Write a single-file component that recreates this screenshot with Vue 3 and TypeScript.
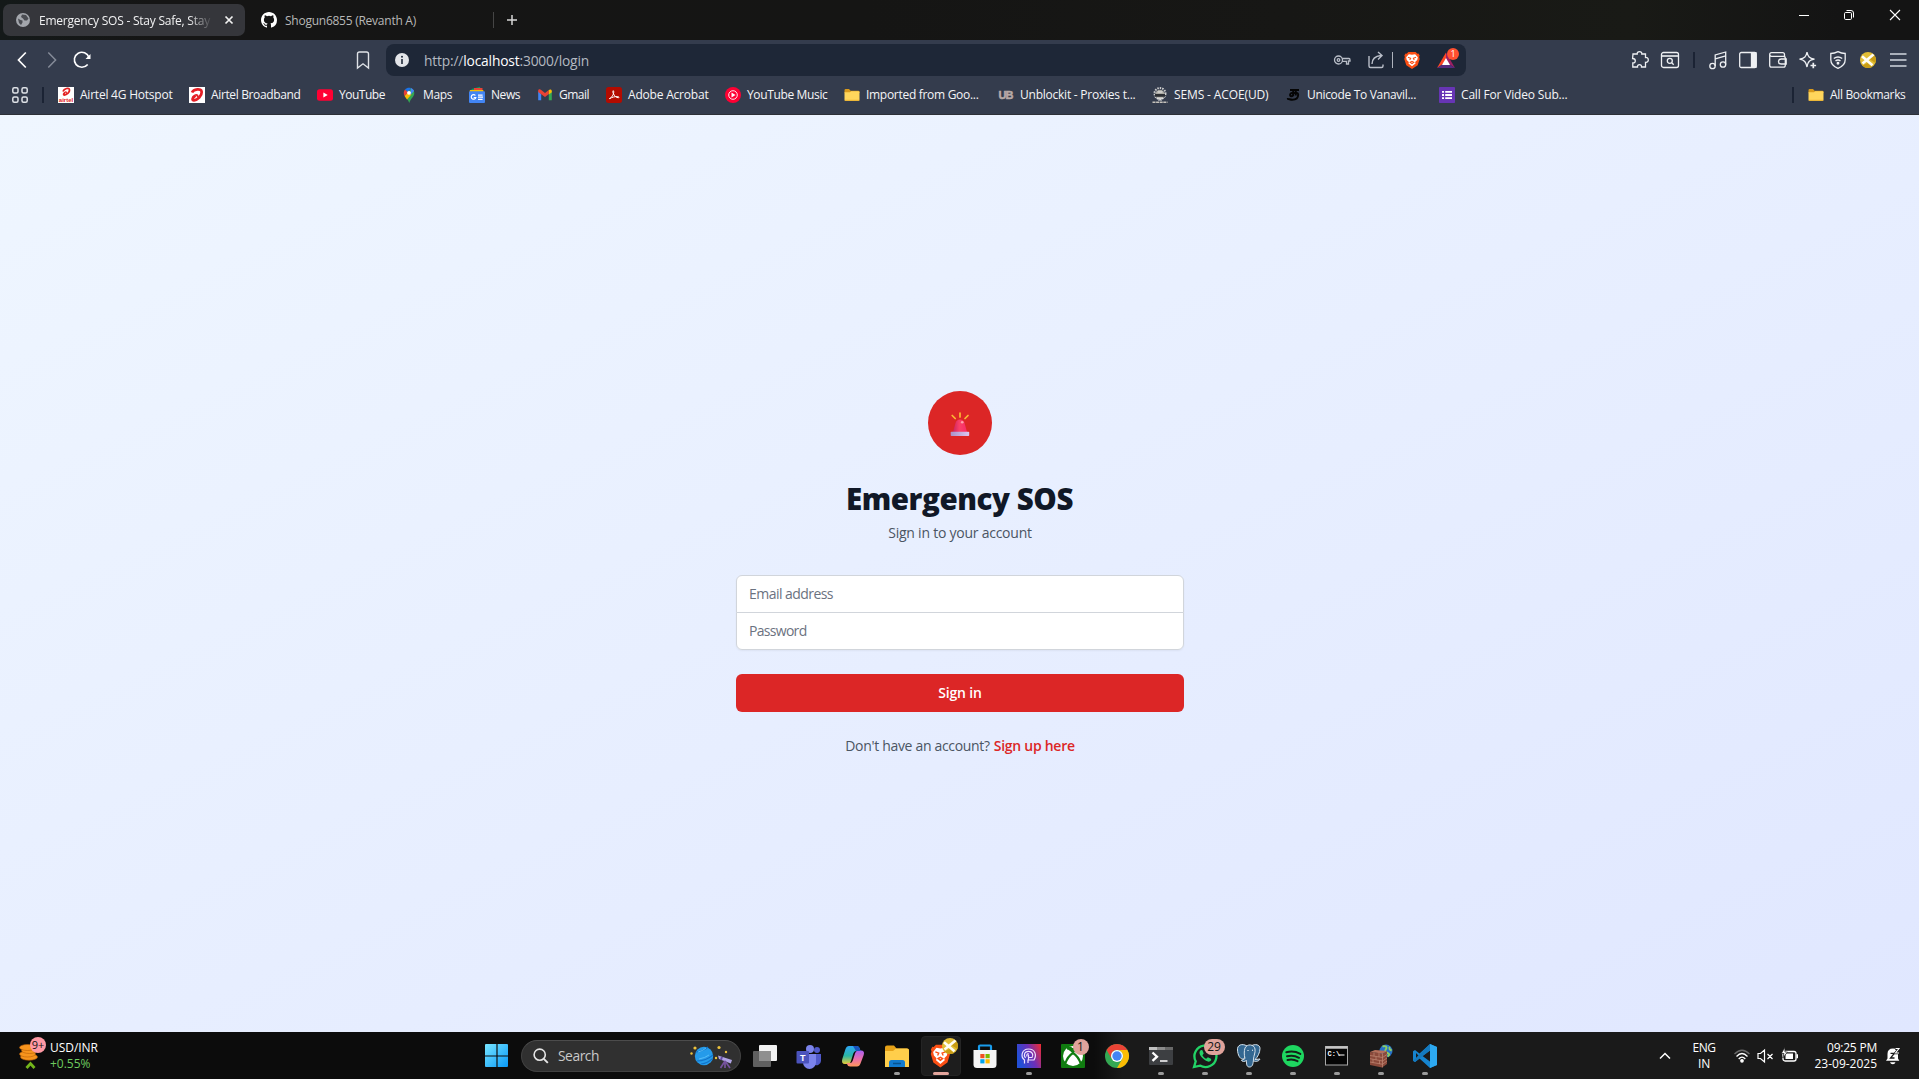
<script setup lang="ts">
import type { Directive } from 'vue'

interface Bookmark { icon: string; label: string; span: number; text: number }
interface Tool { name: string; art: string }
interface TaskApp { name: string; art: string; running?: boolean; active?: boolean; badge?: string }

// Spreads the letters of a label evenly over the given width in pixels.
const vFit: Directive<HTMLElement, number> = {
  mounted(el, { value }) {
    const count = (el.textContent ?? '').trim().length
    if (count > 0) {
      const gap = (value - el.getBoundingClientRect().width) / count
      el.style.letterSpacing = `${gap.toFixed(3)}px`
    }
  },
}

const folder = '<path d="M0.5 3.2Q.5 2 1.7 2H5l1.6 1.7H14.400Q15.500 3.700 15.500 4.800V6H.5z" fill="#d99a1c"/><path d="M.5 5.300H6l1.200-1H14.500Q15.500 4.300 15.500 5.300V12.800Q15.500 14 14.300 14H1.700Q.5 14 .5 12.800z" fill="#ffd65c"/><path d="M.8 13.300h14.400" stroke="#e8b030"/>'

const bookmarks: Bookmark[] = [
  { label: 'Airtel 4G Hotspot', span: 131, text: 92.5, icon: '<rect width="16" height="16" fill="#fff"/><path d="M5 4.500C6 1.500 11.300 0 11.500 3c.2 2.500-3 5-5 5-1.500 0-.8-1.800.5-2.500 1-.6 1.400-.2.800.4" fill="none" stroke="#e32222" stroke-width="1.800"/><text x="8" y="14.800" font-family="Liberation Sans" font-weight="700" font-size="6" text-anchor="middle" fill="#e32222">airtel</text>' },
  { label: 'Airtel Broadband', span: 128, text: 89.5, icon: '<rect width="16" height="16" fill="#fff"/><path d="M3 5.500C4.500 2 12.500.8 12.700 5c.2 4-4.200 8-7.700 8.300-2.500 0-1.500-2.800.8-4.300 1.700-1 3-.4 2 .5" fill="none" stroke="#e51e25" stroke-width="2.700"/>' },
  { label: 'YouTube', span: 84, text: 46, icon: '<rect y="2.300" width="16" height="11.500" rx="2.500" fill="#ff0033"/><path d="M6.400 5.500v5l4.300-2.500z" fill="#fff"/>' },
  { label: 'Maps', span: 68, text: 29, icon: '<path d="M3.600 9 9.900 1.200C12 2 13.300 3.800 13.300 6c0 4-3.800 5.300-5 10C7.300 13 5.200 11 3.600 9z" fill="#34a853"/><path d="M3.600 9 7.900 4l2.500 3.500L6 12.500z" fill="#fbbc04"/><path d="M4 2.600 7.300 5.300 3.600 9C2.300 6.600 2.500 4.300 4 2.600z" fill="#ea4335"/><path d="M4 2.600C5.500.700 8 .3 9.900 1L7.200 5.200z" fill="#1a73e8"/><path d="M9.900 1.100c1.500.4 2.700 1.600 3.200 3L9.400 8z" fill="#4285f4"/><circle cx="8" cy="5.800" r="1.900" fill="#fff"/>' },
  { label: 'News', span: 68, text: 29, icon: '<path d="M2.500 2 11-.2l1.200 6H3z" fill="#0c9d58"/><path d="M5 1h8.500v5H5z" fill="#ea4335"/><path d="M.8 3h13.500v3H.8z" fill="#fbbc04"/><rect y="4.300" width="16" height="11.700" rx="1" fill="#4285f4"/><path d="M6.400 8.500A2.300 2.300 0 1 0 6.800 10.500H4.700M9 8.100h4.600M9 10.200h5M9 12.300h4.600" stroke="#fff" stroke-width="1.200" fill="none"/>' },
  { label: 'Gmail', span: 69, text: 30, icon: '<path d="M1.200 4v9.300h3V7z" fill="#4285f4"/><path d="M11.800 7v6.300h3V4z" fill="#34a853"/><path d="M1.200 3.500C1.500 1.800 3.200 2 4.200 3l3.800 3 3.800-3v4L8 10 1.200 5z" fill="#ea4335"/><path d="M11.800 3c1.200-1 3-.8 3 1v1.200l-3 2.300z" fill="#fbbc04"/>' },
  { label: 'Adobe Acrobat', span: 119, text: 80.5, icon: '<rect width="16" height="16" rx="2.500" fill="#b30b00"/><path d="M3.300 11.600C6.500 10.300 8.300 6 7.600 4c-.4-1-1.300.5-.3 2.500 1.200 2.500 3 4.300 5.200 4.200.8-.1.700-1-.7-1.100-3-.2-6 .7-8 1.900z" fill="none" stroke="#fff" stroke-width="1"/>' },
  { label: 'YouTube Music', span: 119, text: 80.5, icon: '<circle cx="8" cy="8" r="8" fill="#ff0033"/><circle cx="8" cy="8" r="4.300" fill="none" stroke="#fff" stroke-width=".9"/><path d="M6.500 5.500v5l4-2.500z" fill="#fff"/>' },
  { label: 'Imported from Goo...', span: 154, text: 112.5, icon: folder },
  { label: 'Unblockit - Proxies t...', span: 154, text: 115.5, icon: '<text x="8" y="12" font-family="Liberation Sans" font-weight="700" font-size="11" textLength="15" text-anchor="middle" fill="#b8aaa6" stroke="#b8aaa6" stroke-width=".5">UB</text>' },
  { label: 'SEMS - ACOE(UD)', span: 133, text: 94.5, icon: '<circle cx="8" cy="6.500" r="5.500" fill="none" stroke="#cfcfcf" stroke-width="2" stroke-dasharray="1.500 1"/><circle cx="8" cy="7.500" r="4.700" fill="#aaa9a3"/><path d="M3 7h10v2.800H3z" fill="#2b2e33"/><path d="M5.500 5h5M4.500 11.200h7M6 13h4" stroke="#ececec"/><path d="M.5 15.200h15" stroke="#c6c2bc" stroke-width="1.500" stroke-dasharray="3 .6"/>' },
  { label: 'Unicode To Vanavil...', span: 154, text: 109, icon: '<path d="M5 3h9M8.200 3v6.300M8.200 6.300C5 5 4 9.300 6.300 9.300c1.500 0 1.900-1.300 1.900-3 2-1 5-.9 5 1.200 0 3.700-2.700 5.300-6 5.300-2 0-3.800-1.200-5.200-.9M10.800 3v5.500" fill="none" stroke="#050505" stroke-width="1.900"/>' },
  { label: 'Call For Video Sub...', span: 140, text: 106.5, icon: '<rect width="16" height="16" rx=".8" fill="#6735b5"/><path d="M3 4.800h2M3 8h2M3 11.200h2M6.200 4.800H13M6.200 8H13M6.200 11.200H13" stroke="#fff" stroke-width="1.800"/>' },
]

const brandLion = '<path d="M6 1h8l2 2 1.200-.2L18.500 5l-.6 1.600.7 2.200-2.300 7L10 20l-6.300-4.200-2.300-7 .7-2.200L1.500 5l1.300-2.200L4 3z" fill="#fb4f14"/><path d="M10 4.200 13.500 3.500 16.500 7l-.7 3-2.300 2.200.4 1.700L10 17l-3.900-3.100.4-1.700L4.200 10l-.7-3 3-3.500z" fill="#fff"/><path d="m5.500 7 3 1-1 2M14.500 7l-3 1 1 2M8 12.500l2-1 2 1-2 1.500z" fill="none" stroke="#fb4f14" stroke-width="1.200"/>'
const avatar = '<circle cx="10" cy="10" r="8" fill="#e2bd35" stroke="none"/><path d="M14.500 4A8 8 0 0 1 17.500 13L12 9.500zM4.500 15.500A8 8 0 0 0 14 17L9.500 13z" fill="#c99d14" stroke="none"/><path d="m4 6.200 10.500 9M15.500 4.500 4.500 13.500" stroke="#fffdf4" stroke-width="2.600"/>'

const toolsA: Tool[] = [
  { name: 'puzzle', art: '<path d="M3 4h4.200C7 2.500 8 1.600 9.500 1.600S12 2.500 11.800 4H15.500V7.500C17.200 7.300 18.300 8.300 18.300 9.900s-1.100 2.700-2.800 2.400V17H11.500c.2-1.600-.7-2.300-2-2.300s-2.200.7-2 2.300H2.800V13c1.700 0 2.500-.9 2.500-2.200S4.400 8.500 2.600 8.500z"/>' },
  { name: 'find', art: '<rect x="1.500" y="2.500" width="17" height="15" rx="2"/><path d="M1.500 6h17" stroke-width="1.600"/><circle cx="9.800" cy="10.800" r="2.500"/><path d="m11.700 12.700 2 2"/>' },
]
const toolsB: Tool[] = [
  { name: 'music', art: '<circle cx="4.500" cy="16" r="2.700"/><circle cx="15" cy="14.500" r="2.700"/><path d="M7.200 16V5l10.500-3v12.500M7.200 8.800l10.500-3"/>' },
  { name: 'sidebar', art: '<rect x="1.700" y="2.500" width="16.500" height="15" rx="1.600"/><path d="M13.500 3H18v14h-4.500z" fill="#eef0f3"/>' },
  { name: 'wallet', art: '<path d="M16.500 6.500V4.500Q16.500 2.700 14.700 2.700H3.500Q1.700 2.700 1.700 4.500V15.300Q1.700 17.200 3.500 17.200H15.500Q17.300 17.200 17.300 15.300V8.200Q17.300 6.300 15.500 6.300H3.500Q1.700 6.300 1.700 4.500M18.200 9H13.200Q10.500 9 10.500 11.500T13.200 14H18.200z"/>' },
  { name: 'sparkle', art: '<path d="M9 2.200c.9 4.500 2.300 6.200 7.500 7-2.400.4-4 .9-5 1.800-1.300 1.100-1.900 2.900-2.500 6-1-5-2.500-7-7.500-7.800C6.800 8.400 8.100 6.500 9 2.200z"/><path d="M15.300 12.700v5.600M12.500 15.500h5.600" stroke-width="1.700"/>' },
  { name: 'vpn', art: '<path d="M10 1.700c2.300 1.200 4.800 1.800 7.200 1.800v6.200c0 3.800-3.200 7-7.200 8.700-4-1.700-7.200-4.900-7.200-8.700V3.500C5.200 3.500 7.700 2.900 10 1.700z"/><path d="M5.800 8.500q4.200-3 8.400 0M7.500 11q2.500-1.800 5 0" stroke-width="1.500"/><circle cx="10" cy="13.200" r=".8" fill="#eef0f3"/>' },
  { name: 'profile', art: avatar },
  { name: 'menu', art: '<path d="M2 4h16.500M2 10h16.500M2 16h16.500" stroke="#aab0ba" stroke-width="1.800"/>' },
]

const taskApps: TaskApp[] = [
  { name: 'Task view', art: '<rect x="8" y="2" width="18" height="16" rx="1" fill="#f2f2f2"/><rect x="2" y="8" width="18" height="16" rx="1" fill="#696969" fill-opacity=".9"/><path d="M8 8h12v10H8z" fill="#8f8f8f"/>' },
  { name: 'Teams', art: '<circle cx="15" cy="6" r="4" fill="#7b83eb"/><circle cx="22" cy="7" r="3" fill="#5059c9"/><path d="M17 11h9v7a4.500 4.500 0 0 1-7 3.500z" fill="#5059c9"/><path d="M8 11h13v8.500a6.500 6.500 0 0 1-13 0z" fill="#7b83eb"/><rect x="1.500" y="8" width="12.500" height="12.500" rx="1" fill="#4b53bc"/><text x="7.700" y="17.500" font-family="Liberation Sans" font-weight="700" font-size="9" fill="#fff" text-anchor="middle">T</text>' },
  { name: 'Copilot', art: '<defs><linearGradient id="cpA" x2="0" y2="1"><stop stop-color="#2ea6f7"/><stop offset=".55" stop-color="#2ab7a5"/><stop offset="1" stop-color="#e9cd36"/></linearGradient><linearGradient id="cpB" x2="0" y2="1"><stop stop-color="#a85ff2"/><stop offset=".55" stop-color="#ed6fa9"/><stop offset="1" stop-color="#ff9859"/></linearGradient></defs><path d="M10 3h8q2 0 2.800 2.500L21.500 8H17q-2 0-2.700 2.500L12 18q-1 3-3.500 3H6Q2 21 3.300 16L6.500 6Q7.500 3 10 3z" fill="url(#cpA)"/><path d="M18 23.500h-7q-2.300 0-3-2.500L7.500 20h3.300q2.200 0 3-2.500L16 10.500Q17 7.500 19.500 7.500H22q4 0 2.700 4.500L21.500 20.500Q20.500 23.500 18 23.500z" fill="url(#cpB)"/><path d="M14 3h4q2 0 2.800 2.500l.7 2.500H17z" fill="#1854bf"/>' },
  { name: 'Files', running: true, art: '<path d="M2 4.500Q2 2.500 4 2.500h7l2.500 3H24q2 0 2 2V11H2z" fill="#e6a117"/><path d="M2 8h8l3-2.500h11q2 0 2 2V24H2z" fill="#ffce4b"/><path d="M6 24v-4.500Q6 17 8.500 17h11Q22 17 22 19.500V24z" fill="#117bd0"/><path d="M10 20.500h8" stroke="#075390" stroke-width="1.500"/>' },
  { name: 'Brave', running: true, active: true, art: `<g transform="translate(2.200 .5) scale(1.120 1.200)">${brandLion}</g><g transform="translate(13 -7)">${avatar}</g>` },
  { name: 'Store', art: '<path d="M8 9V3.500q0-1 1-1h10q1 0 1 1V9" fill="none" stroke="#199cec" stroke-width="2.200"/><path d="M2.500 7h23v14.500q0 3.500-3.500 3.500H6q-3.500 0-3.500-3.500z" fill="#f5f5f5"/><path d="M9.300 11h4.200v4.200H9.300z" fill="#f25022"/><path d="M14.500 11h4.200v4.200h-4.200z" fill="#7fba00"/><path d="M9.300 16.200h4.200v4.200H9.300z" fill="#00a4ef"/><path d="M14.500 16.200h4.200v4.200h-4.200z" fill="#ffb900"/>' },
  { name: 'Predator', running: true, art: '<defs><linearGradient id="pr" y1=".4" y2="0"><stop stop-color="#234fd6"/><stop offset=".5" stop-color="#6c2fb8"/><stop offset="1" stop-color="#f52c2c"/></linearGradient></defs><rect x="2" y="1" width="24" height="24" fill="url(#pr)"/><path d="M9.500 20.500V17C5 13.500 7 6 13.500 6S22 12 19 17H13v3M10.500 15C8 11.500 10 8.300 13.500 8.300s5.500 3.500 3.500 6.200h-3M13.500 17v-5.500M12 13.500c-.7-2 .5-3 1.700-3" fill="none" stroke="#f0e4ff" stroke-width="1.200"/>' },
  { name: 'Xbox', badge: '1', art: '<rect x="2" y="1" width="24" height="24" rx="1" fill="#107c10"/><circle cx="14" cy="13" r="10" fill="#fff"/><path d="M8 4.500q3-.5 6 2 3-2.500 6-2M6.500 20C8 15.500 11 12 14 10c3 2 6 5.500 7.500 10M8 5.500c2 0 4 1.500 6 4 2-2.500 4-4 6-4" fill="none" stroke="#107c10" stroke-width="2.200"/>' },
  { name: 'Chrome', art: '<circle cx="14" cy="13" r="12" fill="#34a853"/><path d="M3.600 7A12 12 0 0 1 24.400 7H14a6 6 0 0 0-5.200 9z" fill="#ea4335"/><path d="M24.400 7A12 12 0 0 1 14 25l5.200-9A6 6 0 0 0 14 7z" fill="#fbbc04"/><circle cx="14" cy="13" r="6" fill="#fff"/><circle cx="14" cy="13" r="4.700" fill="#4285f4"/>' },
  { name: 'Terminal', running: true, art: '<rect x="2" y="4" width="24" height="18" rx="1" fill="#3d3f42"/><path d="M2 4h8v3H2z" fill="#c0c0c0"/><path d="M10 4h8v3h-8z" fill="#8b8b8b"/><path d="M18 4h8v3h-8z" fill="#696969"/><path d="m5.500 9.500 4.500 4.200-4.500 4.200" stroke="#fff" stroke-width="2.300" fill="none"/><path d="M13 18h7.500" stroke="#fff" stroke-width="1.500"/>' },
  { name: 'WhatsApp', running: true, badge: '29', art: '<path d="m3 24 1.700-5.700A11 10.700 0 1 1 9 22.600z" fill="none" stroke="#22d366" stroke-width="2.300"/><path d="M10 7c-2.500 1.500-1.800 5 2 8.600 3.500 3.300 6.500 4.100 8.300 1.500l-.4-1.400-3-1.400-1.700 1.500c-1.800-.8-3-2-3.800-3.600l1.300-1.600-1.300-3.300z" fill="#22d366"/>' },
  { name: 'pgAdmin', running: true, art: '<g fill="#336791" stroke="#d7e3ec" stroke-width="1"><path d="M12 3C7 0 2 2 2.500 7c.3 5 2.500 9 5 9 1.500 0 2.500-2 4-3.500z"/><path d="M16 3c4-2.500 9-1.500 9 2.500s-2.500 9-5 11l5-.5c-1 2.500-5 3-7 1.500z"/><path d="M10 5c2-4.500 9-4 10 1 .6 4-1.200 6-1.500 10-.3 5-1 8-4 8s-3-3-3-6.500c-2 1.500-4.500 1-5 0l3.500-2C9 12 9 8 10 5z"/></g><path d="m12.500 7 1 1M17 7l1 .5" stroke="#fff"/>' },
  { name: 'Spotify', running: true, art: '<circle cx="14" cy="13" r="11" fill="#1ed760"/><path d="M7.300 9.300q7.500-2 14 1.600M8 13.300q6.500-1.600 12 1.500M8.500 17q5.500-1.300 10 1.200" fill="none" stroke="#142018" stroke-width="2" stroke-linecap="round"/>' },
  { name: 'Command', running: true, art: '<rect x="2.500" y="3.500" width="22" height="18.500" fill="#050505" stroke="#a8a8a8"/><path d="M2.500 4.500h22" stroke="#c5c5c5" stroke-width="2.500"/><text x="4.500" y="12.500" font-family="Liberation Mono" font-weight="700" font-size="7" fill="#fff">C:\\</text><path d="M15.500 12h6" stroke="#fff"/>' },
  { name: 'Firewall', running: true, art: '<circle cx="19" cy="8" r="6.500" fill="#2672c8"/><path d="M15.500 3.500c3-1 5 .5 3.500 2.500s-1 3 1.500 4 2 2 0 3.500M23 4c-1.500 1.500 0 3 1.700 3.500" stroke="#8ccc62" stroke-width="1.900" fill="none"/><path d="m3 9 12.500 1.500 4.500-2.500v13l-5 3.500L3 22z" fill="#8b4a3b"/><path d="m3 9 5-2 12 1-4.500 2.500z" fill="#b5705c"/><path d="m3 12.500 12.500 2L20 11.500M3 15.700l12.500 2.300 4.500-3M3 19l12.500 2.300 4.500-3.300M7 9.500v3.700M12 10v4M9 13.500V17M6 16.300v3.400M12.500 17.500V21M15.500 10.500v14" stroke="#c28a75" stroke-width=".7" fill="none"/>' },
  { name: 'Code', running: true, art: '<path d="m19 1 7 3v18l-7 3L8.500 15.500 4 19l-2-1.200V8.200L4 7l4.500 3.500z" fill="#1684cf"/><path d="m19 7.500-7.500 5.500 7.500 5.500zM5 10v6l3-3z" fill="#1a1a1a"/><path d="m19 1 7 3v18l-7 3z" fill="#2da9f1"/><path d="m2 17.800 2 1.200L19 7.500V1z" fill="#1479be"/>' },
]
</script>

<template>
  <div class="desktop">
    <header class="tabs">
      <div class="tab active">
        <svg class="globe" width="14" height="14" viewBox="0 0 14 14"><circle cx="7" cy="7" r="7" fill="#a3a6ac" /><path d="M2 5.500 4.500 7l2 .5v2L5 12 3 10zM6 1.500 5 4l2 1.500 1.500 2H11l1.500-2L10 2z" fill="#4a4c52" /></svg>
        <div class="tab-title"><span v-fit="171">Emergency SOS - Stay Safe, Stay</span></div>
        <svg width="10" height="10" viewBox="0 0 10 10"><path d="m1.500 1.500 7 7m0-7-7 7" stroke="#f2f2f2" stroke-width="1.700" /></svg>
      </div>
      <div class="tab idle">
        <svg width="16" height="16" viewBox="0 0 16 16"><path fill="#fff" d="M8 0C3.580 0 0 3.580 0 8c0 3.540 2.290 6.530 5.470 7.590.4.070.55-.17.55-.38v-1.490c-2.230.48-2.700-.94-2.700-.94-.36-.92-.89-1.170-.89-1.170-.73-.5.050-.49.050-.49.8.060 1.230.83 1.230.83.72 1.220 1.870.87 2.330.66.070-.52.280-.87.500-1.070-1.780-.2-3.640-.89-3.640-3.950 0-.87.310-1.590.82-2.150-.08-.2-.36-1.020.08-2.120 0 0 .67-.21 2.200.82a7.600 7.600 0 0 1 4 0c1.530-1.040 2.200-.82 2.200-.82.44 1.100.16 1.920.08 2.120.51.56.82 1.270.82 2.150 0 3.070-1.870 3.750-3.650 3.950.29.25.54.73.54 1.480v2.200c0 .21.15.46.55.38A8 8 0 0 0 16 8c0-4.420-3.580-8-8-8z" /></svg>
        <span v-fit="131">Shogun6855 (Revanth A)</span>
      </div>
      <i class="tab-line"></i>
      <svg class="plus" width="12" height="12" viewBox="0 0 12 12"><path d="M6 1v10M1 6h10" stroke="#d6d6d6" stroke-width="1.500" /></svg>
      <div class="window-buttons">
        <svg class="minimise" width="12" height="12" viewBox="0 0 12 12"><path d="M1 6.500h10" stroke="#fff" /></svg>
        <svg width="12" height="12" viewBox="0 0 12 12"><rect x="1.500" y="3.500" width="7" height="7" rx="1.200" fill="none" stroke="#fff" /><path d="M3.500 1.500H8q2.500 0 2.500 2.500v4.500" fill="none" stroke="#fff" /></svg>
        <svg width="12" height="12" viewBox="0 0 12 12"><path d="m1 1 10 10m0-10L1 11" stroke="#fff" stroke-width="1.100" /></svg>
      </div>
    </header>

    <nav class="toolbar">
      <svg class="slot" viewBox="0 0 30 20"><path d="M18.800 2.500 11.500 10l7.300 7.500" fill="none" stroke="#fff" stroke-width="1.700" /></svg>
      <svg class="slot" viewBox="0 0 30 20"><path d="m11.300 2.500 7.300 7.500-7.300 7.500" fill="none" stroke="#858b98" stroke-width="1.500" /></svg>
      <svg class="slot" viewBox="0 0 30 20"><path d="M22 7.500A7.500 7.500 0 1 0 20.700 14.500" fill="none" stroke="#fff" stroke-width="1.600" /><path d="M23.500 4v5h-5z" fill="#fff" /></svg>
      <svg class="slot mark" viewBox="0 0 30 20"><path d="M9.500 4q0-2 2-2h7q2 0 2 2v14L15 13.800 9.500 18z" fill="none" stroke="#dfe2e7" stroke-width="1.400" /></svg>
      <div class="omnibox">
        <svg width="14" height="14" viewBox="0 0 14 14"><circle cx="7" cy="7" r="7" fill="#e3e5e9" /><path d="M7 6v5" stroke="#1e2737" stroke-width="1.600" /><circle cx="7" cy="3.800" r="1" fill="#1e2737" /></svg>
        <span v-fit="165" class="url">http://<b>localhost</b>:3000/login</span>
        <div class="omni-tools">
          <svg width="18" height="18" viewBox="0 0 18 18" fill="none" stroke="#b9bec8" stroke-width="1.300"><circle cx="5.500" cy="9" r="4" /><circle cx="5.500" cy="9" r="1.300" /><path d="M9.200 7.500H16q1 0 1 1.500v1h-1.500v3h-2v-2.700H9.200" /></svg>
          <svg class="share" width="18" height="18" viewBox="0 0 18 18" fill="none" stroke="#b9bec8" stroke-width="1.400"><path d="M2 5v10q0 1.500 1.500 1.500h11q1.500 0 1.500-1.500v-1.500M5 13q0-7.500 9-8.500M11 1l4 3.500-4 4" /></svg>
          <i class="omni-line"></i>
          <svg class="lion" width="18" height="18" viewBox="0 0 20 20" v-html="brandLion"></svg>
          <span class="bat">
            <svg width="18" height="16" viewBox="0 0 18 16"><path d="M9 .5 0 16l9-6z" fill="#ff4724" /><path d="m9 .5 9 15.500-9-6z" fill="#9e1f63" /><path d="M0 16h18L9 10z" fill="#562b7d" /><path d="m9 6-4 7h8z" fill="#fff" /></svg>
            <em>1</em>
          </span>
        </div>
      </div>
      <div class="tool-row">
        <svg v-for="t in toolsA" :key="t.name" class="tool" viewBox="-5 0 30 20" v-html="t.art"></svg>
        <i class="dark-line"></i>
        <svg v-for="t in toolsB" :key="t.name" class="tool" viewBox="-5 0 30 20" v-html="t.art"></svg>
      </div>
    </nav>

    <nav class="bookmarks">
      <svg class="apps" width="16" height="16" viewBox="0 0 16 16" fill="none" stroke="#dfe2e7" stroke-width="1.500"><rect x=".8" y=".8" width="5.200" height="5.200" rx="1.500" /><rect x="10" y=".8" width="5.200" height="5.200" rx="1.500" /><rect x=".8" y="10" width="5.200" height="5.200" rx="1.500" /><rect x="10" y="10" width="5.200" height="5.200" rx="1.500" /></svg>
      <i class="dark-line first"></i>
      <div v-for="b in bookmarks" :key="b.label" class="bookmark" :style="{ width: b.span + 'px' }">
        <svg width="16" height="16" viewBox="0 0 16 16" v-html="b.icon"></svg>
        <span v-fit="b.text">{{ b.label }}</span>
      </div>
      <i class="dark-line last"></i>
      <div class="bookmark all">
        <svg width="16" height="16" viewBox="0 0 16 16" v-html="folder"></svg>
        <span v-fit="75.500">All Bookmarks</span>
      </div>
    </nav>

    <main class="page">
      <section class="card">
        <div class="beacon">
          <svg width="24" height="26" viewBox="0 0 24 26">
            <defs><linearGradient id="dome"><stop stop-color="#ca2461" /><stop offset=".45" stop-color="#fa4168" /><stop offset="1" stop-color="#f82b69" /></linearGradient><linearGradient id="foot"><stop stop-color="#a992c7" /><stop offset="1" stop-color="#ddc6f2" /></linearGradient></defs>
            <path d="M12 2v4M4.200 4.500l3 3M20 4.500l-3 3" stroke="#fbb934" stroke-width="1.700" stroke-linecap="round" />
            <path d="M5 21 7.500 12Q8.500 8.500 12 8.500t4.500 3.500L19 21z" fill="url(#dome)" /><circle cx="14.200" cy="11.300" r="1.300" fill="#ff9fa9" />
            <rect x="2.700" y="20.800" width="18.500" height="4.200" rx=".8" fill="url(#foot)" />
          </svg>
        </div>
        <h1><span v-fit="227">Emergency SOS</span></h1>
        <p class="lead"><span v-fit="143.500">Sign in to your account</span></p>
        <form @submit.prevent>
          <div class="fields">
            <label class="field"><span v-fit="84">Email address</span></label>
            <label class="field"><span v-fit="57.500">Password</span></label>
          </div>
          <button type="submit"><span v-fit="43.500">Sign in</span></button>
        </form>
        <p class="signup"><span v-fit="144.500">Don't have an account?</span><a><span v-fit="81">Sign up here</span></a></p>
      </section>
    </main>

    <footer class="taskbar">
      <div class="widget">
        <div class="coins">
          <svg width="26" height="34" viewBox="0 0 26 34"><g fill="#f7941d" stroke="#b85f09" stroke-width=".6"><ellipse cx="10" cy="17" rx="8.500" ry="3.200" /><ellipse cx="8.500" cy="14" rx="8" ry="3" /><ellipse cx="10.500" cy="10.500" rx="8" ry="3" /><ellipse cx="8.500" cy="7.500" rx="8" ry="3" /></g><path d="m7.500 28 4-4.500 4 4.500" fill="none" stroke="#73b51b" stroke-width="2.800" /></svg>
          <em>9+</em>
        </div>
        <div class="rate"><span v-fit="48">USD/INR</span><span v-fit="40.500" class="up">+0.55%</span></div>
      </div>
      <div class="dock">
        <svg class="start" width="24" height="24" viewBox="0 0 24 24"><defs><linearGradient id="win" x2="1" y2="1"><stop stop-color="#77e5ff" /><stop offset="1" stop-color="#0899f8" /></linearGradient></defs><path d="M0 1q0-1 1-1h10.400v11.400H0zM12.600 0H22q1 0 1 1v10.400H12.600zM0 12.600h11.400V23H1q-1 0-1-1zM12.600 12.600H23V22q0 1-1 1h-9.400z" fill="url(#win)" /></svg>
        <div class="search">
          <svg width="16" height="16" viewBox="0 0 16 16"><circle cx="6.700" cy="6.700" r="5.600" fill="none" stroke="#e5e5e5" stroke-width="1.600" /><path d="m10.800 10.800 4 4" stroke="#e5e5e5" stroke-width="1.900" /></svg>
          <span v-fit="41">Search</span>
          <svg class="space" width="44" height="28" viewBox="0 0 44 28"><circle cx="15" cy="14" r="9.200" fill="#259bea" /><path d="M7 10q8-1 12-5M8 19q9 0 16-6M12 22q7-1 11-5" stroke="#1273c8" stroke-width="1.100" fill="none" /><path d="M9 10q5-1 8-4M10 17q6-1 10-4" stroke="#58bdf8" fill="none" /><g fill="#edc33c"><circle cx="6" cy="6" r="1.600" /><circle cx="2.500" cy="11.500" r="1.200" /><circle cx="30" cy="5.500" r="1.600" /><circle cx="37" cy="10" r="1.200" /><circle cx="27" cy="16" r="1.200" /></g><path d="m29 13.500 14 4.500-1.200 3.500L30 17z" fill="#b0a3e4" /><path d="m33 14.700-1 3.300" stroke="#634ba1" stroke-width="2" /><path d="m36 19-4.500 7M36 19v7M36 19l5 7" stroke="#76529d" stroke-width="1.700" /></svg>
        </div>
        <div v-for="a in taskApps" :key="a.name" class="app" :class="{ active: a.active, running: a.running }">
          <svg width="28" height="26" viewBox="0 0 28 26" v-html="a.art"></svg>
          <em v-if="a.badge" :class="{ wide: a.badge.length > 1 }">{{ a.badge }}</em>
        </div>
      </div>
      <div class="tray">
        <svg class="caret" width="12" height="8" viewBox="0 0 12 8"><path d="m1 6.500 5-5 5 5" fill="none" stroke="#fff" stroke-width="1.500" /></svg>
        <div class="lang"><span v-fit="23">ENG</span><span v-fit="12">IN</span></div>
        <svg class="wifi" width="18" height="16" viewBox="0 0 18 16" fill="none" stroke="#fff" stroke-width="1.300"><path d="M1.500 6Q9-1.500 16.500 6" stroke="#696969" /><path d="M3.500 8.500Q9 2.500 14.500 8.500M5.700 11Q9 7.300 12.300 11" /><circle cx="9" cy="12.800" r="1.200" fill="#fff" /></svg>
        <svg class="volume" width="17" height="14" viewBox="0 0 17 14" fill="none" stroke="#fff" stroke-width="1.200"><path d="M1 4.500h2.500L7.500 1v12L3.500 9.500H1zM10.500 5l5 5m0-5-5 5" /></svg>
        <svg class="battery" width="18" height="16" viewBox="0 0 18 16"><rect x="2" y="3.500" width="13" height="9.500" rx="2" fill="none" stroke="#fff" stroke-width="1.300" /><path d="M4.500 5.500H12V11H4.500z" fill="#fff" /><path d="M15.500 6.300H17v4h-1.500z" fill="#fff" /><path d="M3.800-.5.3 5.500H3L1.800 10 6.500 4H4z" fill="#fff" stroke="#1a1a1a" stroke-width=".7" /></svg>
        <div class="clock"><span v-fit="50">09:25 PM</span><span v-fit="62.500">23-09-2025</span></div>
        <svg class="bell" width="16" height="18" viewBox="0 0 16 18"><path d="M2.500 11.500V7Q2.500 1.500 8 1.500T13 7v4.500l1.300 2.200H1z" fill="#fff" /><path d="M5 15.300h5.500q-.6 2-2.700 2T5 15.300z" fill="#fff" /><path d="M5.500 6.300h3.800L5.500 11h4" stroke="#1a1a1a" stroke-width="1.300" fill="none" /><path d="M10 1.500h4L10.500 6H14.500" stroke="#1a1a1a" stroke-width="2.500" fill="none" /><path d="M10.500 1.500H14L10.500 6H14" stroke="#fff" stroke-width="1.100" fill="none" /></svg>
      </div>
    </footer>
  </div>
</template>

<style>
html, body { margin: 0; background: #141414; }
</style>

<style scoped>
* { box-sizing: border-box; }
.desktop { width: 1919px; height: 1079px; display: flex; flex-direction: column; overflow: hidden; font-family: "Open Sans", "Noto Sans", sans-serif; font-size: 12px; }
svg { display: block; flex: none; overflow: visible; }
span { white-space: nowrap; }
em { font-style: normal; }

.tabs { flex: none; height: 40px; display: flex; align-items: center; padding-left: 3px; background: linear-gradient(90deg, #141919 0, #151515 8%, #151514 45%, #171715 67%, #191a16 85%, #141414 96%); }
.tab { display: flex; align-items: center; flex: none; }
.tab.active { width: 242px; height: 32px; border-radius: 7px; padding-left: 13px; background: #35363b; color: #f1f1f2; }
.tab-title { width: 174px; margin: 0 11px 0 9px; overflow: hidden; -webkit-mask-image: linear-gradient(90deg, #000 86%, transparent); mask-image: linear-gradient(90deg, #000 86%, transparent); }
.idle { width: 248px; padding-left: 16px; gap: 8px; color: #b8b8b8; }
.tab-line { width: 1px; height: 16px; background: #454545; }
.plus { margin-left: 12px; }
.window-buttons { margin-left: auto; display: flex; gap: 34px; padding: 0 18px 11px 0; }
.minimise { margin-right: -1px; }

.toolbar { flex: none; height: 40px; display: flex; align-items: center; padding: 0 6px 0 7px; background: #343c4d; }
.slot { width: 30px; height: 20px; }
.mark { margin-left: 251px; }
.omnibox { width: 1080px; height: 32px; margin-left: 8px; border-radius: 8px; background: #1e2737; display: flex; align-items: center; padding-left: 9px; }
.url { margin-left: 15px; font-size: 13.800px; color: #b4b9c1; }
.url b { font-weight: 400; color: #fff; }
.omni-tools { margin-left: auto; display: flex; align-items: center; padding-right: 11px; }
.share { margin-left: 16px; }
.omni-line { width: 1px; height: 16px; background: #aeb3bd; margin: 0 10px 0 7px; }
.bat { position: relative; margin-left: 16px; }
.bat em { position: absolute; left: 10px; top: -4px; width: 12px; height: 12px; border-radius: 6px; background: #ff5030; color: #fff; font-size: 9px; line-height: 12px; text-align: center; }
.tool-row { margin-left: auto; display: flex; align-items: center; }
.tool { width: 30px; height: 20px; fill: none; stroke: #eef0f3; stroke-width: 1.300; }
.dark-line { flex: none; width: 2px; height: 16px; background: #1b2334; margin: 0 8px; }

.bookmarks { flex: none; height: 35px; display: flex; align-items: flex-start; padding: 7px 0 0 12px; background: #343c4d; border-bottom: 1px solid #2d3037; color: #f4f5f7; }
.dark-line.first { margin: 0 14px; }
.bookmark { flex: none; display: flex; align-items: center; gap: 6px; height: 16px; line-height: 16px; }
.dark-line.last { margin: 0 14px 0 auto; }
.all { width: 111px; }

.page { flex: 1; display: flex; align-items: center; justify-content: center; background: linear-gradient(to bottom right, #eff6ff, #e0e7ff); }
.card { width: 448px; }
.beacon { width: 64px; height: 64px; margin: 0 auto 24px; border-radius: 50%; background: #dc2626; display: flex; align-items: center; justify-content: center; padding-top: 2px; }
h1 { margin: 0; height: 36px; line-height: 39px; font-size: 29.500px; font-weight: 800; color: #111827; text-align: center; }
.lead { margin: 8px 0 0; font-size: 14px; line-height: 20px; color: #4b5563; text-align: center; padding-left: 1px; }
.fields { margin-top: 32px; border-radius: 6px; box-shadow: 0 1px 2px rgba(0, 0, 0, .05); }
.field { display: block; height: 38px; padding: 8px 12.500px; border: 1px solid #d1d5db; background: #fff; font-size: 14px; line-height: 20px; color: #6b7280; }
.field:first-child { border-radius: 6px 6px 0 0; }
.field:last-child { border-radius: 0 0 6px 6px; margin-top: -1px; }
button { display: block; width: 100%; height: 38px; margin-top: 24px; padding: 0 0 0 1px; border: 0; border-radius: 6px; background: #dc2626; color: #fff; font: 600 14px/20px "Open Sans", "Noto Sans", sans-serif; }
.signup { margin: 24px 0 0; display: flex; justify-content: center; gap: 4px; padding-left: 1px; font-size: 14px; line-height: 20px; color: #4b5563; }
.signup a { font-weight: 600; color: #dc2626; }

.taskbar { flex: none; height: 47px; display: flex; align-items: center; background: linear-gradient(90deg, #0c0c0c 57%, #1a1a1a 58.500%); color: #fff; }
.widget { width: 485px; display: flex; align-items: center; padding-left: 19px; }
.coins { position: relative; width: 31px; padding-top: 2px; }
.coins em { position: absolute; left: 11px; top: -1px; width: 16px; height: 16px; border-radius: 8px; background: #ff99a4; color: #141414; font-size: 11px; line-height: 16px; text-align: center; }
.rate, .lang, .clock { display: flex; flex-direction: column; align-items: flex-start; line-height: 16px; }
.rate .up { color: #6ccb5f; }
.dock { display: flex; align-items: center; }
.search { width: 220px; height: 32px; margin-left: 12px; margin-right: 1.500px; padding: 0 7px 0 11px; border: 1px solid #414141; border-top-color: #4c4c4c; border-radius: 16px; background: #303030; display: flex; align-items: center; color: #c9c9c9; font-size: 13.800px; }
.search span { margin-left: 9px; }
.space { margin-left: auto; }
.app { position: relative; width: 40px; height: 40px; margin: 0 2px; border-radius: 4px; display: flex; align-items: center; justify-content: center; border: 1px solid transparent; }
.app.active { background: #1d1d1d; border-color: #242424; }
.running::after { content: ""; position: absolute; bottom: 0; left: 16px; width: 6px; height: 3px; border-radius: 1.500px; background: #9a9a9a; }
.running.active::after { left: 11px; width: 16px; background: #e3a59c; }
.app em { position: absolute; left: 19px; top: 2px; width: 16px; height: 16px; border-radius: 8px; background: #e0a39b; color: #151515; font-size: 12px; line-height: 16px; text-align: center; }
.app em.wide { left: 18px; width: 21px; }
.tray { margin-left: auto; display: flex; align-items: center; padding-right: 18px; }
.lang { width: 24px; align-items: center; margin-left: 21px; }
.wifi { margin-left: 17px; }
.volume { margin-left: 6px; }
.battery { margin-left: 7px; }
.clock { width: 63px; align-items: flex-end; margin-left: 15px; }
.bell { margin-left: 8px; }
</style>
